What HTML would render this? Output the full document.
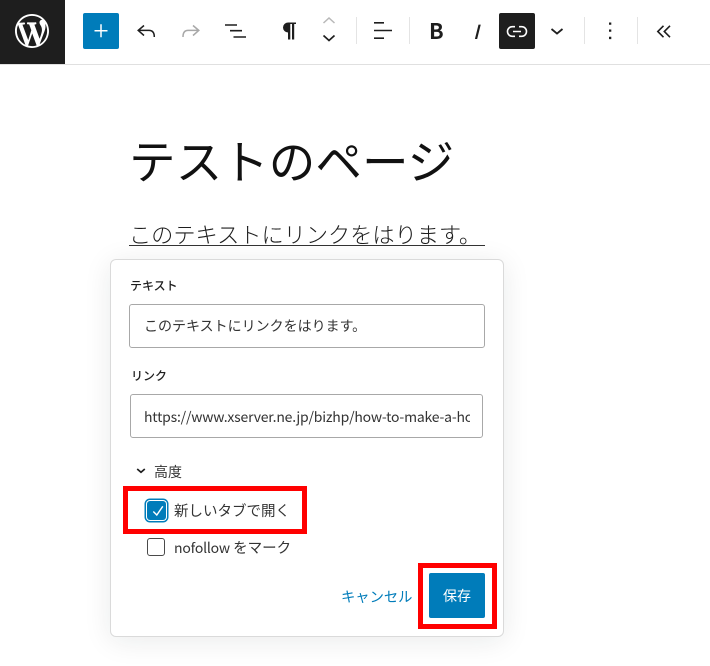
<!DOCTYPE html>
<html lang="ja">
<head>
<meta charset="utf-8">
<style>
html,body{margin:0;padding:0;background:#fff}
body{width:710px;height:666px;position:relative;overflow:hidden;font-family:"Noto Sans CJK JP","Liberation Sans",sans-serif;color:#1e1e1e}
.a{position:absolute;white-space:nowrap}
svg{position:absolute;display:block}
.sep{position:absolute;top:17px;width:1px;height:27px;background:#e4e4e4}
.jp{font-family:"Noto Sans CJK JP",sans-serif}
.red{position:absolute;border:5px solid #f00;box-sizing:border-box}
.input{position:absolute;box-sizing:border-box;border:1px solid #a8a8a8;border-radius:3px;background:#fff}
</style>
</head>
<body>
<div class="a" style="left:0;top:64px;width:710px;height:1px;background:#e0e0e0"></div>
<div class="a" style="left:0;top:0;width:65px;height:64px;background:#1e1e1e"></div>
<svg style="left:15px;top:14px" width="34" height="34" viewBox="0 0 20 20" fill="#fff"><path d="M20 10c0-5.51-4.49-10-10-10C4.48 0 0 4.49 0 10c0 5.52 4.48 10 10 10 5.51 0 10-4.48 10-10zM7.78 15.37L4.37 6.22c.55-.02 1.17-.08 1.17-.08.5-.06.44-1.13-.06-1.11 0 0-1.45.11-2.37.11-.18 0-.37 0-.58-.01C4.12 2.69 6.87 1.11 10 1.11c2.33 0 4.45.87 6.05 2.34-.68-.11-1.65.39-1.65 1.58 0 .74.45 1.36.9 2.1.35.61.55 1.36.55 2.46 0 1.49-1.4 5-1.4 5l-3.03-8.37c.54-.02.82-.17.82-.17.5-.05.44-1.25-.06-1.22 0 0-1.44.12-2.38.12-.87 0-2.33-.12-2.33-.12-.5-.03-.56 1.2-.06 1.22l.92.08 1.26 3.41zM17.41 10c.24-.64.74-1.87.43-4.25.7 1.29 1.05 2.71 1.05 4.25 0 3.29-1.73 6.24-4.4 7.78.97-2.59 1.94-5.2 2.92-7.78zM6.1 18.09C3.12 16.65 1.11 13.53 1.11 10c0-1.3.23-2.48.72-3.59C3.25 10.3 4.67 14.2 6.1 18.09zm4.03-6.63l2.58 6.98c-.86.29-1.76.45-2.71.45-.79 0-1.57-.11-2.29-.33.81-2.38 1.62-4.74 2.42-7.1z"/></svg>

<div class="a" style="left:83px;top:13px;width:36px;height:36px;background:#007cba;border-radius:2px"></div>
<div class="a" style="left:499px;top:13px;width:36px;height:36px;background:#1e1e1e;border-radius:2px"></div>

<svg style="left:0;top:0" width="710" height="64" viewBox="0 0 710 64" fill="none" stroke="#1e1e1e" stroke-width="1.500">
  <path stroke="#fff" d="M94.500 30.800H107.500M101 24.300V37.300"/>
  <path d="M144 25.500 138.200 30.400 144 35.500M138.500 30.400H149Q154.300 30.400 154.300 37"/>
  <path stroke="#a8a8a8" d="M193 25.500 198.800 30.400 193 35.500M198.500 30.400H188Q183 30.400 183 37"/>
  <path stroke-width="1.600" d="M225 25H237M230 30.700H242M233.500 37H246"/>
  <path stroke="none" fill="#1e1e1e" d="M288 22.500H296V24H294.200V39.500H292V24H290.300V39.500H288V32.500A5 5 0 0 1 288 22.500Z"/>
  <path stroke="#b8b8b8" d="M323.500 23 329 18 334.500 23"/>
  <path stroke-width="1.700" d="M323.500 35.500 329 40.500 334.500 35.500"/>
  <path stroke-width="1.600" d="M374 22.800H384M374 30.500H392M374 38.200H384"/>
  <path stroke="none" fill="#fff" d="M506.700 31.500A5.600 5.600 0 0 1 512.300 25.900H515V27.500H512.300A4 4 0 0 0 512.300 35.500H515V37.100H512.300A5.600 5.600 0 0 1 506.700 31.500ZM519 25.900H521.700A5.600 5.600 0 0 1 521.700 37.100H519V35.500H521.700A4 4 0 0 0 521.700 27.500H519ZM513 30.700H521V32.300H513Z"/>
  <path stroke-width="1.800" d="M551.500 29 557 33.600 562.500 29"/>
  <path stroke="none" fill="#1e1e1e" d="M609 22.500H611.300V24.800H609ZM609 29.500H611.300V31.800H609ZM609 36.800H611.300V39.100H609Z"/>
  <path stroke-width="1.600" d="M663.500 25.800 657.800 31.500 663.500 37.200M670 25.800 664.300 31.500 670 37.200"/>
</svg>
<div class="sep" style="left:356px"></div>
<div class="sep" style="left:409px"></div>
<div class="a" style="left:429px;top:18px;font-size:21.500px;line-height:26px;font-weight:700">B</div>
<div class="a" style="left:473px;top:18px;font-size:19.500px;line-height:26px;font-style:italic;font-weight:500">I</div>
<div class="sep" style="left:584px"></div>
<div class="sep" style="left:637px"></div>

<div class="a jp" style="left:129px;top:126px;font-size:46.600px;line-height:68px;font-weight:400;color:#111">テストのページ</div>
<div class="a jp" style="left:129px;top:217px;font-size:22.200px;line-height:34px;font-weight:300;color:#1e1e1e">このテキストにリンクをはります。</div>
<div class="a" style="left:129px;top:245px;width:356px;height:1px;background:#333"></div>

<div class="a" style="left:110px;top:259px;width:394px;height:378px;box-sizing:border-box;background:#fff;border:1px solid #dadada;border-radius:6px;box-shadow:0 4px 28px rgba(25,30,35,.09)"></div>

<div class="a jp" style="left:130px;top:277px;font-size:12px;line-height:18px;font-weight:500">テキスト</div>
<div class="input" style="left:129px;top:304px;width:356px;height:44px"></div>
<div class="a jp" style="left:144px;top:316px;font-size:14px;line-height:21px;color:#333">このテキストにリンクをはります。</div>

<div class="a jp" style="left:131px;top:367px;font-size:12px;line-height:18px;font-weight:500">リンク</div>
<div class="input" style="left:130px;top:394px;width:353px;height:44px"></div>
<div class="a jp" style="left:144px;top:406px;width:326px;overflow:hidden;font-size:14px;letter-spacing:-.2px;line-height:22px;color:#333">https://www.xserver.ne.jp/bizhp/how-to-make-a-homepage</div>

<svg style="left:134px;top:464px" width="14" height="14" viewBox="0 0 14 14" fill="none" stroke="#1e1e1e" stroke-width="1.700"><path d="M3.200 5l3.800 3.300L10.800 5"/></svg>
<div class="a jp" style="left:154px;top:462px;font-size:14px;line-height:20px;color:#333">高度</div>

<div class="red" style="left:123px;top:486px;width:184px;height:48px"></div>
<div class="a" style="left:146.500px;top:500.500px;width:19px;height:19px;box-sizing:border-box;background:#007cba;border-radius:3px;box-shadow:0 0 0 1px #fff,0 0 0 2.500px #007cba"></div>
<svg style="left:147px;top:502px" width="20" height="20" viewBox="0 0 20 20" fill="none" stroke="#fff" stroke-width="1.400"><path d="M6.300 9.500 9.800 13 15.800 4.300"/></svg>
<div class="a jp" style="left:174px;top:500px;font-size:14.500px;line-height:21px;color:#333">新しいタブで開く</div>

<div class="a" style="left:147px;top:538px;width:18px;height:18px;box-sizing:border-box;border:1px solid #4a4a4a;border-radius:3px;background:#fff"></div>
<div class="a jp" style="left:174px;top:537px;font-size:14.500px;line-height:21px;color:#333"><span style="font-size:14px;letter-spacing:-.2px">nofollow</span> をマーク</div>

<div class="a jp" style="left:341px;top:586px;font-size:14.300px;line-height:21px;color:#007cba">キャンセル</div>
<div class="red" style="left:418px;top:563px;width:79px;height:66px"></div>
<div class="a" style="left:428.500px;top:573px;width:56.500px;height:45px;background:#007cba;border-radius:2px"></div>
<div class="a jp" style="left:429px;top:586px;width:56px;text-align:center;font-size:14px;line-height:21px;color:#fff">保存</div>
</body>
</html>
